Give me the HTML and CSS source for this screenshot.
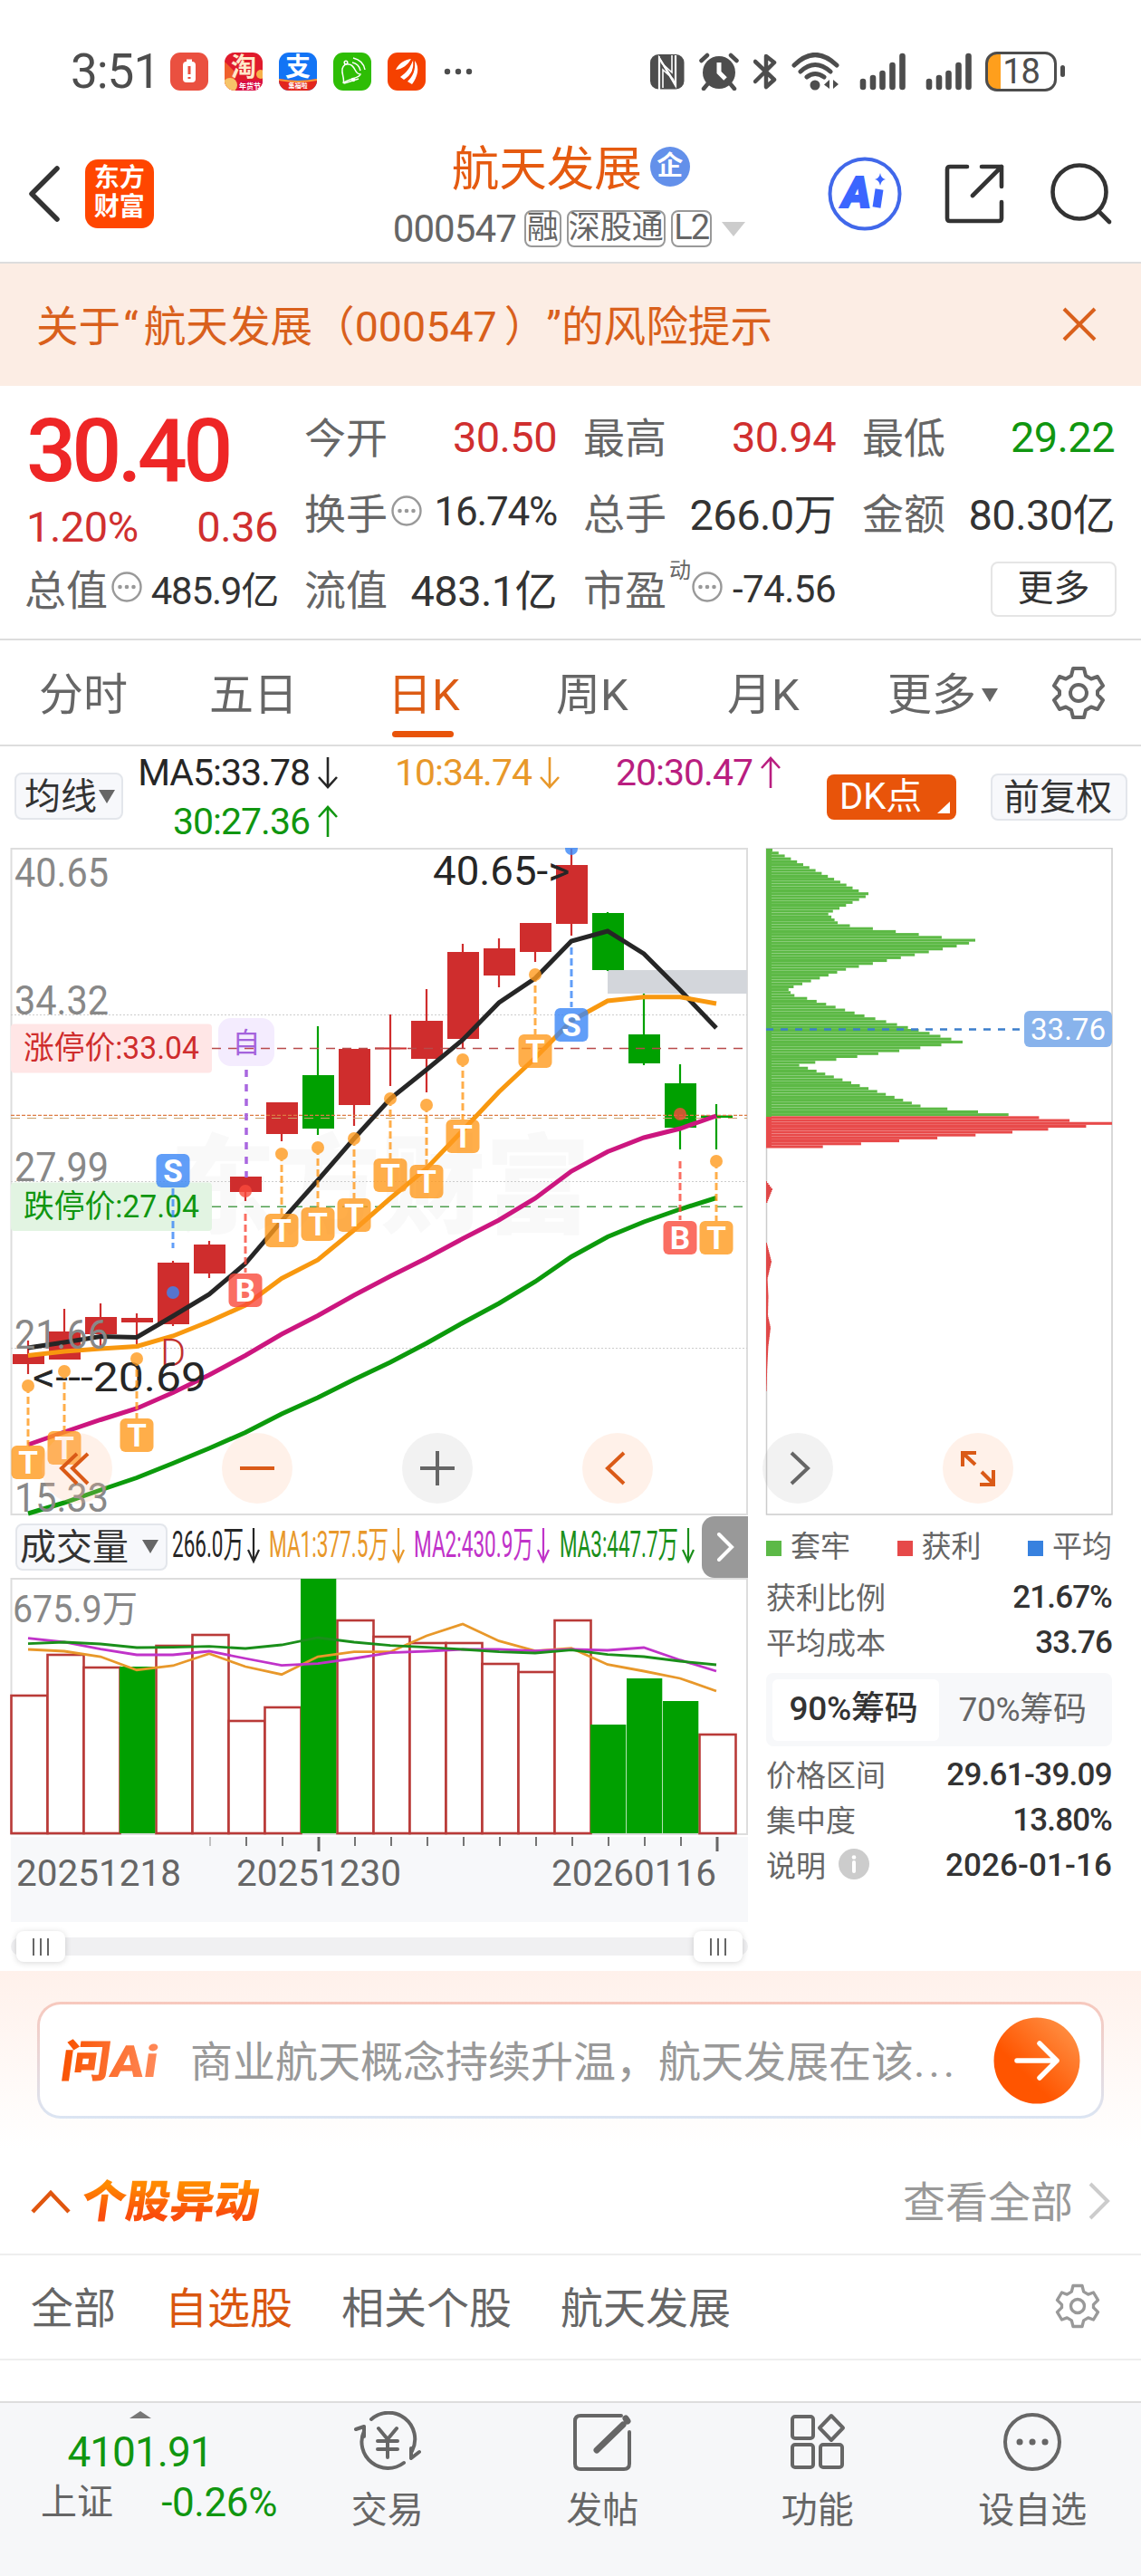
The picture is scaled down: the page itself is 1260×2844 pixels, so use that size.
FILE: index.html
```html
<!DOCTYPE html>
<html lang="zh-CN">
<head>
    <meta charset="UTF-8">
    <meta name="viewport" content="width=device-width, initial-scale=1.0">
    <title>航天发展 000547</title>
    <link rel="stylesheet" href="styles.css">
</head>
<body>
    <svg width="0" height="0" class="defs">
        <symbol id="down" viewBox="0 0 24 36"><path d="M12 1V34M2 23L12 34L22 23" fill="none" stroke="currentColor" stroke-width="2.6"/></symbol>
        <symbol id="up" viewBox="0 0 24 36"><path d="M12 35V2M2 13L12 2L22 13" fill="none" stroke="currentColor" stroke-width="2.6"/></symbol>
        <symbol id="tip" viewBox="0 0 36 36"><circle cx="18" cy="18" r="15.5" fill="none" stroke="#999" stroke-width="2.4"/><g fill="#999"><circle cx="10.5" cy="18" r="2.3"/><circle cx="18" cy="18" r="2.3"/><circle cx="25.5" cy="18" r="2.3"/></g></symbol>
        <symbol id="gear" viewBox="0 0 60 60"><path d="M24 3H36L38 11L44 14.500L51 12L57 22L51 28V32L57 38L51 48L44 45.500L38 49L36 57H24L22 49L16 45.500L9 48L3 38L9 32V28L3 22L9 12L16 14.500L22 11Z" fill="none" stroke="currentColor" stroke-width="4" stroke-linejoin="round"/><circle cx="30" cy="30" r="9" fill="none" stroke="currentColor" stroke-width="4"/></symbol>
        <symbol id="signal" viewBox="0 0 52 42"><path d="M4 32V38M15 28V38M25.500 23V38M36.500 14V38M47.500 4V38" stroke="#4d4d4d" stroke-width="6.600" stroke-linecap="round"/></symbol>
    </svg>

    <!-- Barre d'état -->
    <div class="status-bar">
        <span class="clock">3:51</span>
        <div class="app-icons">
            <svg width="42" height="42" viewBox="0 0 42 42"><rect width="42" height="42" rx="11" fill="#ea5040"/><rect x="14" y="10" width="14" height="23" rx="4" fill="#fff"/><rect x="18" y="7.500" width="6" height="3" fill="#fff"/><path d="M21 15V24M21 27V29" stroke="#ea5040" stroke-width="3"/></svg>
            <svg width="42" height="42" viewBox="0 0 42 42"><defs><clipPath id="rc"><rect width="42" height="42" rx="11"/></clipPath></defs><g clip-path="url(#rc)"><rect width="42" height="42" fill="#e01b2c"/><path d="M0 10L12 22L9 42H0Z" fill="#f0602c"/><circle cx="6" cy="36" r="8" fill="#f6c469"/><circle cx="40" cy="24" r="5" fill="#f7b14a"/><path d="M14 42L17 31H42V42Z" fill="#d90f46"/></g><text x="21" y="26" font-size="28" font-weight="700" text-anchor="middle" fill="#ffe9c9">淘</text><text x="28" y="40" font-size="8" font-weight="700" text-anchor="middle" fill="#fff">年货节</text></svg>
            <svg width="42" height="42" viewBox="0 0 42 42"><g clip-path="url(#rc)"><rect width="42" height="42" fill="#1374f5"/><path d="M0 29Q21 33 42 29V42H0Z" fill="#e3261d"/><path d="M0 29Q21 33 42 29V31Q21 35 0 31Z" fill="#f99a3b"/></g><text x="21" y="26" font-size="28" font-weight="700" text-anchor="middle" fill="#fff">支</text><text x="21" y="39" font-size="7" font-weight="700" text-anchor="middle" fill="#fff">集福啦</text></svg>
            <svg width="42" height="42" viewBox="0 0 42 42"><rect width="42" height="42" rx="11" fill="#2ebd05"/><g fill="none" stroke="#fff" stroke-width="1.500"><path d="M11 34C13 29 9 24 10 18C11 14 14 12 17 13C20 13 22 15 24 19C26 23 28 24 30 24C30 28 16 29 11 34Z"/><circle cx="14" cy="11" r="1.800"/><path d="M12 34L28 29M21 11C26 12 29 15 30 20M22 6C30 8 34 13 35 19"/></g><circle cx="22" cy="30" r="2.200" fill="#fff"/></svg>
            <svg width="42" height="42" viewBox="0 0 42 42"><rect width="42" height="42" rx="11" fill="#f54100"/><path d="M9 19C13 11 19 8 26 7C22 14 17 18 9 19ZM14 27C21 22 25 17 28 8C31 17 26 25 18 30Z" fill="#fff"/><path d="M22 32C28 26 31 20 30 9C36 17 33 27 27 35Z" fill="#fff"/><path d="M13.500 23C20 20 25 15 27.500 8M20 31C27 25 30 18 29 9" fill="none" stroke="#f54100" stroke-width="1.400"/></svg>
        </div>
        <svg class="more-dots" width="32" height="8" viewBox="0 0 32 8"><g fill="#4d4d4d"><circle cx="4" cy="4" r="3.200"/><circle cx="16" cy="4" r="3.200"/><circle cx="28" cy="4" r="3.200"/></g></svg>
        <div class="sys-icons">
            <svg width="38" height="39" viewBox="0 0 38 39"><rect width="37.500" height="38.500" rx="9" fill="#4d4d4d"/><path d="M10 39V4L28 33V1" fill="none" stroke="#fff" stroke-width="2.200"/><path d="M10 2V4L28 35V33M14 37V17L26 28M24 1V20L12 9" fill="none" stroke="#fff" stroke-width="1.600"/></svg>
            <svg width="44" height="42" viewBox="0 0 44 42"><circle cx="22" cy="22" r="18" fill="#4d4d4d"/><path d="M2.500 9L9 3M41.500 9L35 3M5 40L10 34M39 40L34 34" stroke="#4d4d4d" stroke-width="4.500" stroke-linecap="round"/><path d="M22 11V22L29 29" fill="none" stroke="#fff" stroke-width="5"/></svg>
            <svg width="26" height="42" viewBox="0 0 26 42"><path d="M2 10L23 30L14 38V4L23 11L2 32" fill="none" stroke="#4d4d4d" stroke-width="4.500" stroke-linejoin="round" stroke-linecap="round"/></svg>
            <svg width="54" height="42" viewBox="0 0 54 42"><g fill="none" stroke="#4d4d4d" stroke-width="5" stroke-linecap="round"><path d="M3 14Q26 -9 50 14M10 21Q26 6 43 21M17 27Q26 20 36 27"/></g><circle cx="26" cy="36" r="5.500" fill="#4d4d4d"/><path d="M42 30V40L36 35.500ZM46 30V40L52 35Z" fill="#4d4d4d"/></svg>
            <svg class="sig" width="52" height="42"><use href="#signal"/></svg>
            <svg class="sig" width="52" height="42"><use href="#signal"/></svg>
        </div>
        <div class="battery"><span>18</span></div>
    </div>

    <!-- En-tête -->
    <header class="top-nav">
        <svg class="back" width="38" height="64" viewBox="0 0 38 64"><path d="M33 4L5 32L33 60" fill="none" stroke="#333" stroke-width="5.500" stroke-linecap="round" stroke-linejoin="round"/></svg>
        <div class="brand">东方<br>财富</div>
        <div class="stock">
            <div class="stock-name">航天发展<span class="badge">企</span></div>
            <div class="stock-code"><span class="code">000547</span><b class="t1">融</b><b class="t3">深股通</b><b class="t2">L2</b><i></i></div>
        </div>
        <div class="ai-round">
            <svg width="82" height="82" viewBox="0 0 82 82"><circle cx="41" cy="41" r="38.500" fill="none" stroke="#4168ea" stroke-width="4"/><path d="M58 18Q59 24 64 25Q59 26 58 32Q57 26 52 25Q57 24 58 18Z" fill="#3b66ff"/><text x="16" y="56" class="ai-word" textLength="31">A</text><path d="M57 36L54 56" stroke="#3b66ff" stroke-width="9"/></svg>
        </div>
        <svg class="share" width="66" height="66" viewBox="0 0 66 66"><path d="M25 3H6Q3 3 3 6V60Q3 63 6 63H60Q63 63 63 60V42M41 3H63V25M63 3L31 35" fill="none" stroke="#333" stroke-width="4.600" stroke-linecap="round" stroke-linejoin="round"/></svg>
        <svg width="70" height="70" viewBox="0 0 70 70"><circle cx="33" cy="33" r="29.500" fill="none" stroke="#333" stroke-width="4.600"/><path d="M54 54L66 66" stroke="#333" stroke-width="4.600" stroke-linecap="round"/></svg>
    </header>

    <div class="notice">
        <span>关于<q>“</q>航天发展（<q class="num">000547</q>）”的风险提示</span>
        <svg width="38" height="38" viewBox="0 0 38 38"><path d="M2 2L36 36M36 2L2 36" stroke="#d9601c" stroke-width="4"/></svg>
    </div>

    <!-- Cotation -->
    <section class="quote">
        <div class="price-col">
            <div class="price">30.40</div>
            <div class="change red"><span>1.20%</span><span>0.36</span></div>
            <div class="cell"><label>总值</label><svg class="tip"><use href="#tip"/></svg><em class="cap">485.9亿</em></div>
        </div>
        <div class="cells">
            <div class="cell"><label>今开</label><em class="red">30.50</em></div>
            <div class="cell"><label>最高</label><em class="red">30.94</em></div>
            <div class="cell"><label>最低</label><em class="green">29.22</em></div>
            <div class="cell"><label>换手</label><svg class="tip"><use href="#tip"/></svg><em class="sm">16.74%</em></div>
            <div class="cell"><label>总手</label><em>266.0万</em></div>
            <div class="cell"><label>金额</label><em>80.30亿</em></div>
            <div class="cell"><label>流值</label><em>483.1亿</em></div>
            <div class="cell"><label>市盈</label><sup>动</sup><svg class="tip"><use href="#tip"/></svg><em class="xs">-74.56</em></div>
            <div class="cell"><button class="more-btn">更多</button></div>
        </div>
    </section>

    <nav class="periods">
        <span>分时</span><span>五日</span><span class="on">日K</span><span>周K</span><span>月K</span><span class="drop">更多<i></i></span>
        <svg class="gear" width="60" height="60"><use href="#gear"/></svg>
    </nav>

    <div class="ma-bar">
        <button class="pill avg">均线<i></i></button>
        <div class="ma-list">
            <span>MA5:33.78<svg><use href="#down"/></svg></span>
            <span class="c-orange">10:34.74<svg><use href="#down"/></svg></span>
            <span class="c-pink">20:30.47<svg><use href="#up"/></svg></span>
            <span class="green">30:27.36<svg><use href="#up"/></svg></span>
        </div>
        <button class="dk">DK点</button>
        <button class="pill adj">前复权</button>
    </div>

    <!-- Graphiques -->
    <main class="charts">
        <div class="left">
            <svg id="kline" width="840" height="738" viewBox="0 936 840 738"></svg>
            <div class="vol-head">
                <button class="pill vol-btn">成交量<i></i></button>
                <svg class="vol-ma" width="584" height="68" viewBox="188 0 584 68">
                    <text x="190" y="45" textLength="79" lengthAdjust="spacingAndGlyphs" fill="#262626">266.0万</text>
                    <text x="297" y="45" textLength="132" lengthAdjust="spacingAndGlyphs" fill="#e8982a">MA1:377.5万</text>
                    <text x="457" y="45" textLength="132" lengthAdjust="spacingAndGlyphs" fill="#c033c9">MA2:430.9万</text>
                    <text x="618" y="45" textLength="131" lengthAdjust="spacingAndGlyphs" fill="#1a8f1a">MA3:447.7万</text>
                    <g fill="none" stroke-width="2.200">
                        <path d="M280 13V50M274 37L280 50L286 37" stroke="#262626"/>
                        <path d="M440 13V50M434 37L440 50L446 37" stroke="#e8982a"/>
                        <path d="M600 13V50M594 37L600 50L606 37" stroke="#c033c9"/>
                        <path d="M760 13V50M754 37L760 50L766 37" stroke="#1a8f1a"/>
                    </g>
                </svg>
                <div class="vol-next"><svg width="20" height="32" viewBox="0 0 20 32"><path d="M3 2L17 16L3 30" fill="none" stroke="#fff" stroke-width="4" stroke-linecap="round"/></svg></div>
            </div>
            <svg id="volume" width="840" height="382" viewBox="0 1742 840 382"></svg>
            <div class="slider"><i></i><i></i></div>
        </div>
        <div class="right">
            <svg id="chips" width="420" height="738" viewBox="840 936 420 738"></svg>
            <div class="legend"><span><i class="lg"></i>套牢</span><span><i class="lr"></i>获利</span><span><i class="lb"></i>平均</span></div>
            <dl><dt>获利比例</dt><dd>21.67%</dd></dl>
            <dl><dt>平均成本</dt><dd>33.76</dd></dl>
            <div class="toggle"><b>90%筹码</b><span>70%筹码</span></div>
            <dl><dt>价格区间</dt><dd class="wide">29.61-39.09</dd></dl>
            <dl><dt>集中度</dt><dd>13.80%</dd></dl>
            <dl><dt>说明<svg width="34" height="34" viewBox="0 0 34 34"><circle cx="17" cy="17" r="17" fill="#ccc"/><circle cx="17" cy="9.500" r="2.300" fill="#fff"/><path d="M17 15V25" stroke="#fff" stroke-width="4" stroke-linecap="round"/></svg></dt><dd class="wide date">2026-01-16</dd></dl>
        </div>

        <!-- Boutons posés sur les graphiques -->
        <div class="tools">
            <svg viewBox="0 0 78 78"><circle cx="39" cy="39" r="39" class="warm"/><path d="M39 23L22 39L39 56M51 23L34 39L51 56" class="o"/></svg>
            <svg viewBox="0 0 78 78"><circle cx="39" cy="39" r="39" class="warm"/><path d="M20 39H58" class="o"/></svg>
            <svg viewBox="0 0 78 78"><circle cx="39" cy="39" r="39" class="cold"/><path d="M20 39H58M39 20V58" class="g"/></svg>
            <svg viewBox="0 0 78 78"><circle cx="39" cy="39" r="39" class="warm"/><path d="M46 22L28 39L46 56" class="o"/></svg>
            <svg viewBox="0 0 78 78"><circle cx="39" cy="39" r="39" class="cold"/><path d="M32 22L50 39L32 56" class="g"/></svg>
            <svg viewBox="0 0 78 78"><circle cx="39" cy="39" r="39" class="warm"/><path d="M37 22H22V37M22 22L36 35M56 41V57H41M43 43L56 56" class="o"/></svg>
        </div>
    </main>

    <section class="ask">
        <div class="ask-card">
            <svg width="122" height="60" viewBox="0 0 122 60">
                <defs><linearGradient id="ga"><stop offset="0" stop-color="#f95200"/><stop offset="1" stop-color="#ff8a5a"/></linearGradient></defs>
                <text x="7" y="48" class="ask-logo" textLength="107" lengthAdjust="spacingAndGlyphs" fill="url(#ga)" transform="skewX(-8)">问Ai</text>
            </svg>
            <span>商业航天概念持续升温，航天发展在该<small>...</small></span>
            <svg class="go" width="96" height="96" viewBox="0 0 96 96">
                <defs><linearGradient id="gb" x1="0" y1="1" x2="1" y2="0"><stop offset=".35" stop-color="#ff5500"/><stop offset="1" stop-color="#ff9a50"/></linearGradient></defs>
                <circle cx="48" cy="48" r="47.500" fill="url(#gb)"/><path d="M26 48H70M51 29L70 48L51 67" fill="none" stroke="#fff" stroke-width="5.500" stroke-linecap="round" stroke-linejoin="round"/>
            </svg>
        </div>
    </section>

    <div class="moves-title">
        <svg width="44" height="28" viewBox="0 0 44 28"><path d="M2 26L22 5L42 26" fill="none" stroke="#e0560f" stroke-width="4.500"/></svg>
        <h2>个股异动</h2>
        <span>查看全部</span>
        <svg width="26" height="42" viewBox="0 0 26 42"><path d="M3 2L22 21L3 40" fill="none" stroke="#ccc" stroke-width="4"/></svg>
    </div>

    <div class="moves-tabs">
        <span>全部</span><span class="on">自选股</span><span>相关个股</span><span>航天发展</span>
        <svg width="50" height="50" viewBox="0 0 60 60"><use href="#gear" width="60" height="60"/></svg>
    </div>
    <div class="rest"></div>

    <footer class="tab-bar">
        <div class="index">
            <i></i>
            <strong>4101.91</strong>
            <p><span>上证</span><em>-0.26%</em></p>
        </div>
        <div class="item"><svg viewBox="0 0 76 68"><path d="M20 9A29 29 0 0 1 65 44M56 57A29 29 0 0 1 12 22M3 20L12 17V28M73 45L64 52V41M28 19L38 31L48 19M38 31V51M27 33H49M27 42H49"/></svg>交易</div>
        <div class="item"><svg viewBox="0 0 68 68"><path d="M55 5H10Q4 5 4 11V58Q4 64 10 64H58Q64 64 64 58V23"/><path d="M60 8L62 11M57 15L28 43" stroke-width="7"/></svg>发帖</div>
        <div class="item"><svg viewBox="0 0 68 68"><rect x="6" y="6" width="23" height="24" rx="3"/><path d="M49 5L62 18.500L49 32L36 18.500Z"/><rect x="6" y="37" width="23" height="25" rx="3"/><rect x="37" y="37" width="24" height="25" rx="3"/></svg>功能</div>
        <div class="item"><svg viewBox="0 0 68 68"><circle cx="34" cy="34" r="30"/><path d="M20 34h.1M34 34h.1M48 34h.1" stroke-width="7"/></svg>设自选</div>
    </footer>

    <script src="chart.js"></script>
</body>
</html>
```
FILE: styles.css
```css
* {
    margin: 0;
    padding: 0;
    box-sizing: border-box;
}

body {
    width: 1260px;
    height: 2844px;
    overflow: hidden;
    background: #fff;
    color: #333;
    font-family: Roboto, "Noto Sans CJK SC", sans-serif;
    font-size: 46px;
}

svg {
    display: block;
    flex: none;
}

svg text {
    font-family: Roboto, "Noto Sans CJK SC", sans-serif;
}

button {
    font: inherit;
    color: inherit;
    border: 0;
    background: none;
}

em, i {
    font-style: normal;
}

q::before,
q::after {
    content: none;
}

.defs {
    position: absolute;
}

.red { color: #d02f2f; }
.green { color: #109610; }
.c-orange { color: #e8982a; }
.c-pink { color: #b91e80; }

/* Status bar */
.status-bar {
    display: flex;
    align-items: center;
    height: 78px;
    margin-top: 40px;
    padding: 0 84px 0 78px;
}

.clock {
    width: 110px;
    font-size: 53px;
    letter-spacing: -1px;
    color: #4d4d4d;
}

.app-icons {
    display: flex;
    gap: 18px;
}

.more-dots {
    margin-left: 20px;
}

.sys-icons {
    display: flex;
    align-items: center;
    margin-left: auto;
    gap: 16px;
}

.sys-icons .sig {
    margin-left: 5px;
}

.battery {
    position: relative;
    display: flex;
    align-items: center;
    justify-content: center;
    width: 79px;
    height: 44px;
    margin: 0 9px 0 14px;
    border: 3.5px solid #4d4d4d;
    border-radius: 13px;
    font-size: 38px;
    color: #4d4d4d;
    background: linear-gradient(90deg, #ff9f1c 14px, #fff 14px);
}

.battery::after {
    content: "";
    position: absolute;
    right: -12px;
    top: 12px;
    width: 5px;
    height: 13px;
    border-radius: 3px;
    background: #4d4d4d;
}

.battery span {
    letter-spacing: -1px;
}

/* Header */
.top-nav {
    display: flex;
    align-items: center;
    height: 173px;
    padding: 21px 31px 0 30px;
    border-bottom: 2px solid #ddd;
}

.brand {
    width: 76px;
    height: 76px;
    margin-left: 26px;
    padding-top: 5px;
    border-radius: 14px;
    background: #ff4600;
    color: #fff;
    font-size: 28px;
    font-weight: 700;
    line-height: 32px;
    text-align: center;
}

.stock {
    width: 400px;
    margin-left: 264px;
}

.stock-name {
    display: flex;
    align-items: center;
    height: 66px;
    padding-left: 65px;
    font-size: 52.5px;
    color: #e55a10;
}

.badge {
    width: 44px;
    height: 44px;
    margin: 3px 0 0 9px;
    border-radius: 50%;
    background: #6390ea;
    color: #fff;
    font-size: 29px;
    font-weight: 700;
    line-height: 42px;
    text-align: center;
}

.stock-code {
    display: flex;
    align-items: center;
    height: 64px;
    padding-top: 11px;
    font-size: 35px;
    color: #666;
}

.code {
    width: 145px;
    font-size: 42px;
    letter-spacing: -0.9px;
}

.stock-code b {
    height: 41px;
    margin-right: 6px;
    border: 2px solid #999;
    border-radius: 8px;
    font-weight: 400;
    line-height: 35px;
    text-align: center;
}

.t1 { width: 41px; }
.t3 { width: 109px; }
.t2 { width: 45px; font-size: 38px; letter-spacing: -2px; }

.stock-code i {
    margin-left: 5px;
    border: 13px solid transparent;
    border-top: 16px solid #ccc;
    border-bottom: 0;
}

.ai-round {
    margin-left: 82px;
}

.ai-word {
    font-size: 48px;
    font-weight: 900;
    font-style: italic;
    fill: #3b66ff;
    stroke: #3b66ff;
    stroke-width: 2;
}

.share {
    margin: 0 50px 0 47px;
}

/* Notice */
.notice {
    display: flex;
    align-items: center;
    justify-content: space-between;
    height: 135px;
    padding: 0 49px 2px 40px;
    background: #fcede4;
    color: #d9601c;
    font-size: 46.6px;
    text-spacing-trim: space-all;
}

.notice span {
    margin-top: -3px;
}

.notice q {
    padding: 0 6px 0 3px;
}

.notice .num {
    padding: 0 8px 0 0;
}

/* Quote */
.quote {
    display: flex;
    gap: 31px;
    height: 281px;
    padding: 14px 29px 0;
    border-bottom: 2px solid #ddd;
}

.price-col {
    width: 278px;
}

.price {
    height: 110px;
    color: #ee2626;
    font-size: 97px;
    font-weight: 500;
    line-height: 117px;
    letter-spacing: -4.8px;
}

.change {
    display: flex;
    justify-content: space-between;
    height: 58px;
    font-size: 47px;
    line-height: 63px;
    letter-spacing: -0.5px;
}

.cells {
    display: grid;
    grid-template-columns: repeat(3, 277px);
    grid-auto-rows: 84px;
    column-gap: 31px;
    align-content: start;
}

.cell {
    display: flex;
    align-items: center;
    height: 84px;
}

.cell label {
    margin: -5px 2px 0 -2px;
    color: #666;
}

.cell em {
    margin: -3px 0 0 auto;
    font-size: 47px;
    letter-spacing: -0.6px;
}

.cell em.red,
.cell em.green {
    margin-top: 1px;
}

.cell .sm {
    font-size: 44px;
    letter-spacing: -1.2px;
}

.cell .cap {
    font-size: 42px;
    letter-spacing: -1.2px;
}

.cell .xs {
    margin-top: 0;
    font-size: 42px;
    letter-spacing: -0.5px;
}

.cell sup {
    align-self: flex-start;
    margin-left: 1px;
    margin-right: -1px;
    font-size: 24px;
    color: #666;
    line-height: 44px;
}

.tip {
    width: 36px;
    height: 36px;
    margin: -4px 0 0 1px;
}

.more-btn {
    width: 139px;
    height: 61px;
    margin: 0 -2px 0 auto;
    border: 2px solid #e5e5e5;
    border-radius: 8px;
    font-size: 40px;
    line-height: 52px;
}

/* Period tabs */
.periods {
    display: grid;
    grid-template-columns: 188px 197px 186px 189px 177px 181px 60px;
    align-items: center;
    height: 117px;
    padding-left: 43px;
    border-bottom: 2px solid #ddd;
    font-size: 49px;
    color: #666;
}

.periods span {
    margin-top: -5px;
}

.periods .on {
    position: relative;
    color: #dc5b14;
}

.periods .on::after {
    content: "";
    position: absolute;
    left: 5px;
    bottom: -16px;
    width: 68px;
    height: 7px;
    border-radius: 4px;
    background: #e8540a;
}

.drop i,
.pill i {
    display: inline-block;
    border: 9px solid transparent;
    border-top: 15px solid #666;
    border-bottom: 0;
}

.drop i {
    margin: 0 0 9px 6px;
}

/* Moving averages */
.ma-bar {
    display: flex;
    align-items: flex-start;
    height: 112px;
    padding-left: 16px;
}

.pill {
    height: 52px;
    border: 2px solid #e3e6eb;
    border-radius: 8px;
    background: #f7f8fb;
    font-size: 40px;
    line-height: 45px;
    text-align: left;
    white-space: nowrap;
}

.avg {
    width: 120px;
    margin-top: 29px;
    padding-left: 9px;
}

.avg i {
    border-width: 15px 9px 0;
    margin: 0 0 6px 2px;
}

.ma-list {
    display: grid;
    grid-template-columns: 238px 245px 244px;
    grid-auto-rows: 54px;
    height: 112px;
    padding-top: 2px;
    font-size: 41px;
    letter-spacing: -1px;
}

.ma-list span {
    display: flex;
    align-items: center;
    justify-content: flex-end;
    color: #262626;
}

.ma-list .c-orange { color: #e8982a; }
.ma-list .c-pink { color: #b91e80; }
.ma-list .green { color: #109610; }

.ma-list svg {
    width: 24px;
    height: 36px;
    margin-left: 8px;
}

.dk {
    position: relative;
    width: 143px;
    height: 50px;
    margin: 31px 0 0 50px;
    padding-left: 14px;
    border-radius: 8px;
    background: #e8540a;
    color: #fff;
    font-size: 40px;
    line-height: 46px;
    text-align: left;
}

.dk::after {
    content: "";
    position: absolute;
    right: 7px;
    bottom: 7px;
    border-left: 14px solid transparent;
    border-bottom: 13px solid #fff;
}

.adj {
    width: 151px;
    margin: 30px 0 0 38px;
    padding-left: 12px;
}

/* Charts */
.charts {
    position: relative;
    display: flex;
    height: 1240px;
}

.left { width: 840px; }
.right { width: 420px; }

.vol-head {
    display: flex;
    align-items: center;
    height: 68px;
    padding-left: 17px;
}

.vol-btn {
    width: 168px;
    padding-left: 3px;
}

.vol-btn i {
    margin: 0 0 7px 15px;
}

.vol-ma {
    margin-left: 3px;
}

.vol-ma text {
    font-size: 40px;
}

.vol-next {
    display: flex;
    align-items: center;
    justify-content: center;
    width: 51px;
    height: 68px;
    margin-left: 3px;
    border-radius: 14px 0 0 14px;
    background: #999;
}

.slider {
    display: flex;
    align-items: center;
    justify-content: space-between;
    width: 814px;
    height: 20px;
    margin: 15px 0 0 12px;
    padding: 0 6px;
    border-radius: 10px;
    background: #f0f0f2;
}

.slider i {
    width: 54px;
    height: 34px;
    border-radius: 8px;
    box-shadow: 0 1px 7px rgba(0, 0, 0, 0.16);
    background: linear-gradient(90deg, #666 2px, #fff 2px, #fff 8px, #666 8px, #666 10px, #fff 10px, #fff 16px, #666 16px) 18px 8px / 18px 19px no-repeat #fff;
}

.legend {
    display: flex;
    justify-content: space-between;
    align-items: center;
    width: 382px;
    height: 68px;
    margin-left: 6px;
    font-size: 33px;
    color: #666;
}

.legend span {
    display: flex;
    align-items: center;
    line-height: 40px;
}

.legend i {
    width: 17px;
    height: 17px;
    margin: 3px 10px 0 0;
}

.lg { background: #5cb947; }
.lr { background: #e64949; }
.lb { background: #3781df; }

.right dl {
    display: flex;
    justify-content: space-between;
    align-items: center;
    width: 382px;
    height: 50px;
    margin-left: 6px;
    font-size: 33px;
    color: #666;
}

.legend + dl {
    margin-top: -5px;
}

.right dt {
    display: flex;
    align-items: center;
    gap: 14px;
}

.right dd {
    padding-top: 2px;
    color: #333;
    font-size: 35px;
    font-weight: 500;
    letter-spacing: -0.9px;
}

.right .wide { letter-spacing: -0.7px; }
.right .date { letter-spacing: 0.1px; }

.toggle {
    display: flex;
    align-items: center;
    width: 382px;
    height: 81px;
    margin: 10px 0 5px 6px;
    padding: 0 7px;
    border-radius: 8px;
    background: #f7f8fa;
    font-size: 37px;
    letter-spacing: -0.3px;
    color: #666;
    text-align: center;
}

.toggle b {
    width: 184px;
    height: 68px;
    padding-right: 5px;
    border-radius: 6px;
    background: #fff;
    color: #333;
    font-weight: 500;
    line-height: 65px;
}

.toggle span {
    width: 184px;
    line-height: 65px;
}

.tools {
    position: absolute;
    left: 46px;
    top: 646px;
    display: flex;
    gap: 121px;
}

.tools svg {
    width: 78px;
    height: 78px;
}

.warm { fill: rgba(255, 190, 155, 0.22); }
.cold { fill: rgba(160, 160, 160, 0.14); }

.tools path {
    fill: none;
    stroke-width: 4;
}

.tools .o { stroke: #da5a17; }
.tools .g { stroke: #666; }

/* Ask AI */
.ask {
    height: 196px;
    padding: 34px 41px 0;
    background: linear-gradient(#fff1eb, #fff);
}

.ask-card {
    display: flex;
    align-items: center;
    height: 129px;
    padding: 0 23px 0 21px;
    border: 3px solid transparent;
    border-radius: 26px;
    background: linear-gradient(#fff, #fff) padding-box, linear-gradient(#f7c8bd, #dbe5f3) border-box;
    color: #999;
    font-size: 47px;
}

.ask-card span {
    margin: -5px 0 0 23px;
    white-space: nowrap;
}

.ask-card small {
    font-size: 47px;
    letter-spacing: 4px;
}

.ask-card .go {
    margin-left: auto;
}

.ask-logo {
    font-size: 49px;
    font-weight: 900;
}

/* Moves */
.moves-title {
    display: flex;
    align-items: center;
    height: 118px;
    padding: 0 33px 0 34px;
    border-bottom: 2px solid #eee;
    color: #999;
    font-size: 47px;
}

.moves-title h2 {
    margin: -8px 0 0 13px;
    font-size: 49px;
    font-weight: 900;
    background: linear-gradient(#ff8a00 30%, #fa4d0c 75%);
    -webkit-background-clip: text;
    color: transparent;
    transform: skewX(-8deg);
}

.moves-title span {
    margin: -6px 16px 0 auto;
}

.moves-tabs {
    display: flex;
    align-items: center;
    height: 116px;
    padding: 0 45px 0 34px;
    border-bottom: 2px solid #eee;
    color: #666;
    font-size: 47px;
}

.moves-tabs span {
    margin: -6px 54px 0 0;
}

.moves-tabs .on {
    color: #d9560f;
}

.moves-tabs svg {
    margin: -3px 0 0 auto;
    color: #999;
}

.rest {
    height: 45px;
}

/* Tab bar */
.tab-bar {
    display: grid;
    grid-template-columns: 309px repeat(4, 237.5px);
    height: 193px;
    border-top: 2px solid #ddd;
    background: #f6f7f9;
    color: #666;
    font-size: 40px;
}

.index {
    text-align: center;
}

.index i {
    display: block;
    width: 24px;
    margin: 9px auto 0;
    border: 12px solid transparent;
    border-bottom: 8px solid #777;
    border-top: 0;
}

.index strong {
    display: block;
    height: 70px;
    color: #109610;
    font-size: 46px;
    font-weight: 400;
    line-height: 74px;
    letter-spacing: -1px;
}

.index p {
    display: flex;
    justify-content: space-between;
    padding: 0 3px 0 45px;
    line-height: 46px;
}

.index em {
    color: #109610;
    font-size: 44px;
    letter-spacing: -0.4px;
}

.item {
    display: flex;
    flex-direction: column;
    align-items: center;
    padding-top: 9px;
    line-height: 84px;
}

.item svg {
    height: 68px;
    fill: none;
    stroke: #666;
    stroke-width: 4;
    stroke-linecap: round;
    stroke-linejoin: round;
}

/* Chart text */
.axis { font-size: 45px; fill: #888; }
.note { font-size: 45px; fill: #262626; }
.mark { font-size: 35px; font-weight: 700; fill: #fff; text-anchor: middle; }
.dates { font-size: 41px; fill: #666; }
.water { font-size: 118px; font-weight: 900; fill: #f9f9f9; }
```
FILE: chart.js
```js
const X = i => 31 + i * 40;
const RED = '#cf2d2d', GREEN = '#00a000';

const line = (x1, y1, x2, y2, c, w, extra = '') =>
    `<line x1="${x1}" y1="${y1}" x2="${x2}" y2="${y2}" stroke="${c}" stroke-width="${w}" ${extra}/>`;
const rect = (x, y, w, h, c, extra = '') =>
    `<rect x="${x}" y="${y}" width="${w}" height="${h}" fill="${c}" ${extra}/>`;
const text = (x, y, w, cls, s, extra = '') =>
    `<text x="${x}" y="${y}" class="${cls}" ${w ? `textLength="${w}" lengthAdjust="spacingAndGlyphs"` : ''} ${extra}>${s}</text>`;
const poly = (ys, c, w) =>
    `<polyline points="${ys.map((y, i) => X(i) + ',' + y).join(' ')}" fill="none" stroke="${c}" stroke-width="${w}"/>`;

// [top wick, body top, body bottom, bottom wick, up]
const candles = [
    [1480, 1495, 1506, 1517, 1], [1445, 1470, 1501, 1501, 1], [1439, 1454, 1473, 1486, 1], [1450, 1455, 1460, 1484, 1],
    [1392, 1394, 1462, 1464, 1], [1370, 1374, 1406, 1411, 1], [1299, 1299, 1316, 1326, 1], [1217, 1217, 1252, 1260, 1],
    [1133, 1187, 1246, 1253, 0], [1158, 1158, 1220, 1243, 1], [1120, 1156.500, 1158.500, 1199, 1], [1092, 1127, 1169, 1206, 1],
    [1042, 1051, 1147, 1157, 1], [1036, 1047, 1077, 1090, 1], [1019, 1019, 1051, 1062, 1], [937, 955, 1020, 1033, 1],
    [1007, 1008, 1071, 1072, 0], [1097, 1142, 1174, 1176, 0], [1175, 1196, 1245, 1269, 0], [1219, 1231.5, 1234, 1269, 0]
];
const ma5 = [1488, 1482, 1475.5, 1476.5, 1453, 1429, 1395, 1348, 1303, 1257, 1213, 1181, 1148, 1107, 1080, 1039, 1028, 1053, 1093, 1135];
const ma10 = [1496.5, 1492, 1489, 1486.5, 1475, 1459, 1441, 1411.5, 1391, 1358, 1323, 1290, 1248, 1205.5, 1168, 1127, 1105, 1100.7, 1100.7, 1108];
const ma20 = [1595, 1581, 1567.5, 1555, 1537.5, 1518, 1496.5, 1473, 1452.5, 1430, 1409, 1389, 1367.5, 1347, 1323, 1293, 1271.5, 1256, 1246, 1232];
const ma30 = [1671, 1659, 1645, 1631.5, 1615.5, 1599, 1581.5, 1561, 1543, 1523, 1504, 1483, 1460.5, 1439, 1415, 1387.5, 1365.5, 1349, 1335, 1322.5];

// [index, letter, dot y, box y, dash start, dash end]
const marks = [
    [0, 'T', 1530, 1596], [1, 'T', 1514, 1580], [3, 'T', 1500, 1566], [7, 'T', 1274, 1340], [8, 'T', 1267, 1333],
    [9, 'T', 1257, 1323], [10, 'T', 1213, 1279], [11, 'T', 1220, 1286], [12, 'T', 1170, 1236], [14, 'T', 1076, 1142],
    [19, 'T', 1282, 1348], [4, 'S', 1427, 1274, 1312, 1378], [15, 'S', 937, 1113, 1046, 1112],
    [6, 'B', 1315, 1406, 1340, 1405], [18, 'B', 1230, 1348, 1282, 1347]
];
const markColor = { T: '#ff9a1e', S: '#3a87f7', B: '#fa4a3c' };

function drawKline() {
    let s = text(188, 1352, 464, 'water', '东方财富');
    s += `<rect x="12.5" y="937" width="812.500" height="735" fill="none" stroke="#ddd" stroke-width="2"/>`;
    [1120.5, 1304.5, 1488.5].forEach(y => s += line(12, y, 825, y, '#ccc', 1, 'stroke-dasharray="2 2"'));
    s += rect(671, 1071, 154, 26, '#d3d6db');
    candles.forEach(([h, t, b, l, up], i) => {
        const c = up ? RED : GREEN;
        s += line(X(i), h, X(i), l, c, 2.2) + rect(X(i) - 17, t, 35, b - t, c);
    });
    s += rect(12, 1130.5, 222, 54, '#ffe6e6', 'rx="4"') + rect(12, 1305.5, 222, 53.5, '#e2f4e2', 'rx="4"');
    s += rect(241, 1124, 62, 53, '#f4ecfe', 'rx="14"');
    s += line(234, 1157.5, 825, 1157.5, '#b84a4a', 1.4, 'stroke-dasharray="10 8"');
    s += line(234, 1332.3, 825, 1332.3, '#4f9f4f', 1.4, 'stroke-dasharray="10 8"');
    s += line(12, 1231.300, 825, 1231.300, '#dd7b43', 1.2, 'stroke-dasharray="4 2"');
    s += line(12, 1234.500, 825, 1234.500, '#c9a26b', 1.2, 'stroke-dasharray="10 8"');
    s += text(26, 1169, 194, '', '涨停价:33.04', 'font-size="35" fill="#cf2d2d"');
    s += text(26, 1344, 194, '', '跌停价:27.04', 'font-size="35" fill="#109610"');
    s += text(256.500, 1162, 0, '', '自', 'font-size="31" fill="#a463dc"');
    s += line(272, 1181, 272, 1300, '#a967e0', 3.5, 'stroke-dasharray="8 8"');
    s += text(16, 979, 104, 'axis', '40.65') + text(16, 1120, 104, 'axis', '34.32') + text(16, 1304, 104, 'axis', '27.99');
    s += poly(ma5, '#262626', 5) + poly(ma10, '#f8980f', 5) + poly(ma20, '#cc167f', 5) + poly(ma30, '#0c9a0c', 5);
    s += text(16, 1489, 104, 'axis', '21.66') + text(16, 1669, 104, 'axis', '15.33');
    s += text(177, 1508, 0, '', 'D', 'font-size="43" font-weight="300" fill="#c03030"');
    s += text(478, 977, 151, 'note', '40.65-&gt;') + text(36, 1536, 192, 'note', '&lt;---20.69');
    marks.forEach(([i, ch, dot, box, a, b]) => {
        const c = markColor[ch];
        s += `<g opacity=".8">` + line(X(i), a || dot, X(i), b || box, c, 3, 'stroke-dasharray="8 4"');
        s += `<circle cx="${X(i)}" cy="${dot}" r="7" fill="${c}"/>`;
        s += rect(X(i) - 18.5, box, 37, 37, c, 'rx="6"') + '</g>';
        s += `<text x="${X(i)}" y="${box + 31}" class="mark">${ch}</text>`;
    });
    document.getElementById('kline').innerHTML = s;
}

// positive: rising day, negative: falling day
const bars = [1871, 1826, 1840, -1840, 1816, 1804, 1899, 1884, -1743, 1788, 1806, 1813, 1813, 1836, 1845, 1788, -1904, -1853, -1878, 1914];
const vol1 = [1821, 1823, 1829, 1843.7, 1839, 1825.7, 1840, 1848.7, 1829, 1823.7, 1823.7, 1806, 1793, 1811.7, 1822.7, 1819.7, 1837.7, 1845, 1853, 1867];
const vol2 = [1808.7, 1813, 1820.7, 1827, 1827, 1823, 1831, 1838.7, 1836.7, 1831, 1824.7, 1823, 1821, 1821, 1822.7, 1821, 1822, 1819, 1832.7, 1845];
const vol3 = [1814.7, 1813, 1815, 1819, 1818.7, 1817.7, 1820, 1816, 1808, 1813, 1816.7, 1818.7, 1821, 1823.7, 1825, 1821.7, 1826.7, 1829, 1834, 1838];

function drawVolume() {
    let s = '<rect x="12.5" y="1743" width="812.500" height="282" fill="none" stroke="#ddd" stroke-width="2"/>';
    s += rect(12, 2028, 814, 94, '#f7f8fa');
    bars.forEach((y, i) => {
        const x = 12 + i * 40;
        if (y > 0) s += `<rect x="${x + 0.5}" y="${y + 1}" width="40" height="${2023 - y}" fill="#fff" stroke="#b93a38" stroke-width="2.6"/>`;
    });
    bars.forEach((y, i) => {
        if (y < 0) s += rect(12 + i * 40, -y, 39.3, 2024 + y, GREEN);
    });
    s += text(14, 1791, 138, 'axis', '675.9万', 'style="font-size:42px"');
    s += poly(vol1, '#e8982a', 2.8) + poly(vol2, '#c033c9', 2.8) + poly(vol3, '#1a8f1a', 2.8);
    for (let i = 5; i < 20; i++) {
        const big = i === 8 || i === 19;
        s += line(X(i) + 1, 2028, X(i) + 1, big ? 2044 : 2038, i === 5 ? '#bbb' : '#666', big ? 3 : 1.8);
    }
    s += text(18, 2082, 182, 'dates', '20251218') + text(261, 2082, 182, 'dates', '20251230') + text(609, 2082, 182, 'dates', '20260116');
    document.getElementById('volume').innerHTML = s;
}

// cost distribution: [y, width]
const shape = [
    [938, 7], [988, 113], [1008, 68], [1020, 81], [1039, 231], [1043, 215], [1069, 90], [1091, 24], [1098, 29], [1101, 43],
    [1120, 105], [1150, 217], [1153, 194], [1175, 35], [1221, 172], [1241, 382], [1244, 338], [1251, 252], [1267, 42]
];
const tails = [
    [[1304, 1], [1312, 7], [1327, 1]],
    [[1372, 1], [1392, 6], [1411, 1.5], [1430, 2.5], [1451, 2], [1465, 5], [1485, 2.5], [1510, 1.2], [1535, 0.5]]
];

function widthAt(pts, y) {
    for (let i = 1; i < pts.length; i++) {
        if (y <= pts[i][0]) {
            const [y0, w0] = pts[i - 1], [y1, w1] = pts[i];
            return w0 + (w1 - w0) * (y - y0) / (y1 - y0);
        }
    }
    return pts[pts.length - 1][1];
}

function drawChips() {
    const step = 3.21;
    let s = '<rect x="846.500" y="936.500" width="381.500" height="735.500" fill="none" stroke="#ccc" stroke-width="1.500"/>';
    for (let y = 937; y < 1267; y += step) {
        // keep the peaks sharp when a key point falls inside the row
        const peak = shape.find(p => p[0] >= y && p[0] < y + step && [113, 231, 217, 382].includes(p[1]));
        const w = peak ? peak[1] : widthAt(shape, y + 1);
        s += rect(846, y.toFixed(2), w.toFixed(1), 3.1, y < 1232 ? '#5cb945' : '#e84a4a');
    }
    s += rect(846, 937, 6, 296, '#5cb945') + rect(846, 1233, 6, 34, '#e84a4a');
    tails.forEach(t => {
        for (let y = t[0][0]; y < t[t.length - 1][0]; y += 2) s += rect(846, y, widthAt(t, y).toFixed(1), 2, '#e04848');
    });
    s += line(846, 1136.5, 1128, 1136.5, '#3b7ecb', 2.6, 'stroke-dasharray="8 8"');
    s += rect(1131, 1116, 97, 40, '#88b3ec', 'rx="6"');
    s += text(1138, 1148, 83, '', '33.76', 'font-size="34" fill="#fff"');
    document.getElementById('chips').innerHTML = s;
}

drawKline();
drawVolume();
drawChips();
```
